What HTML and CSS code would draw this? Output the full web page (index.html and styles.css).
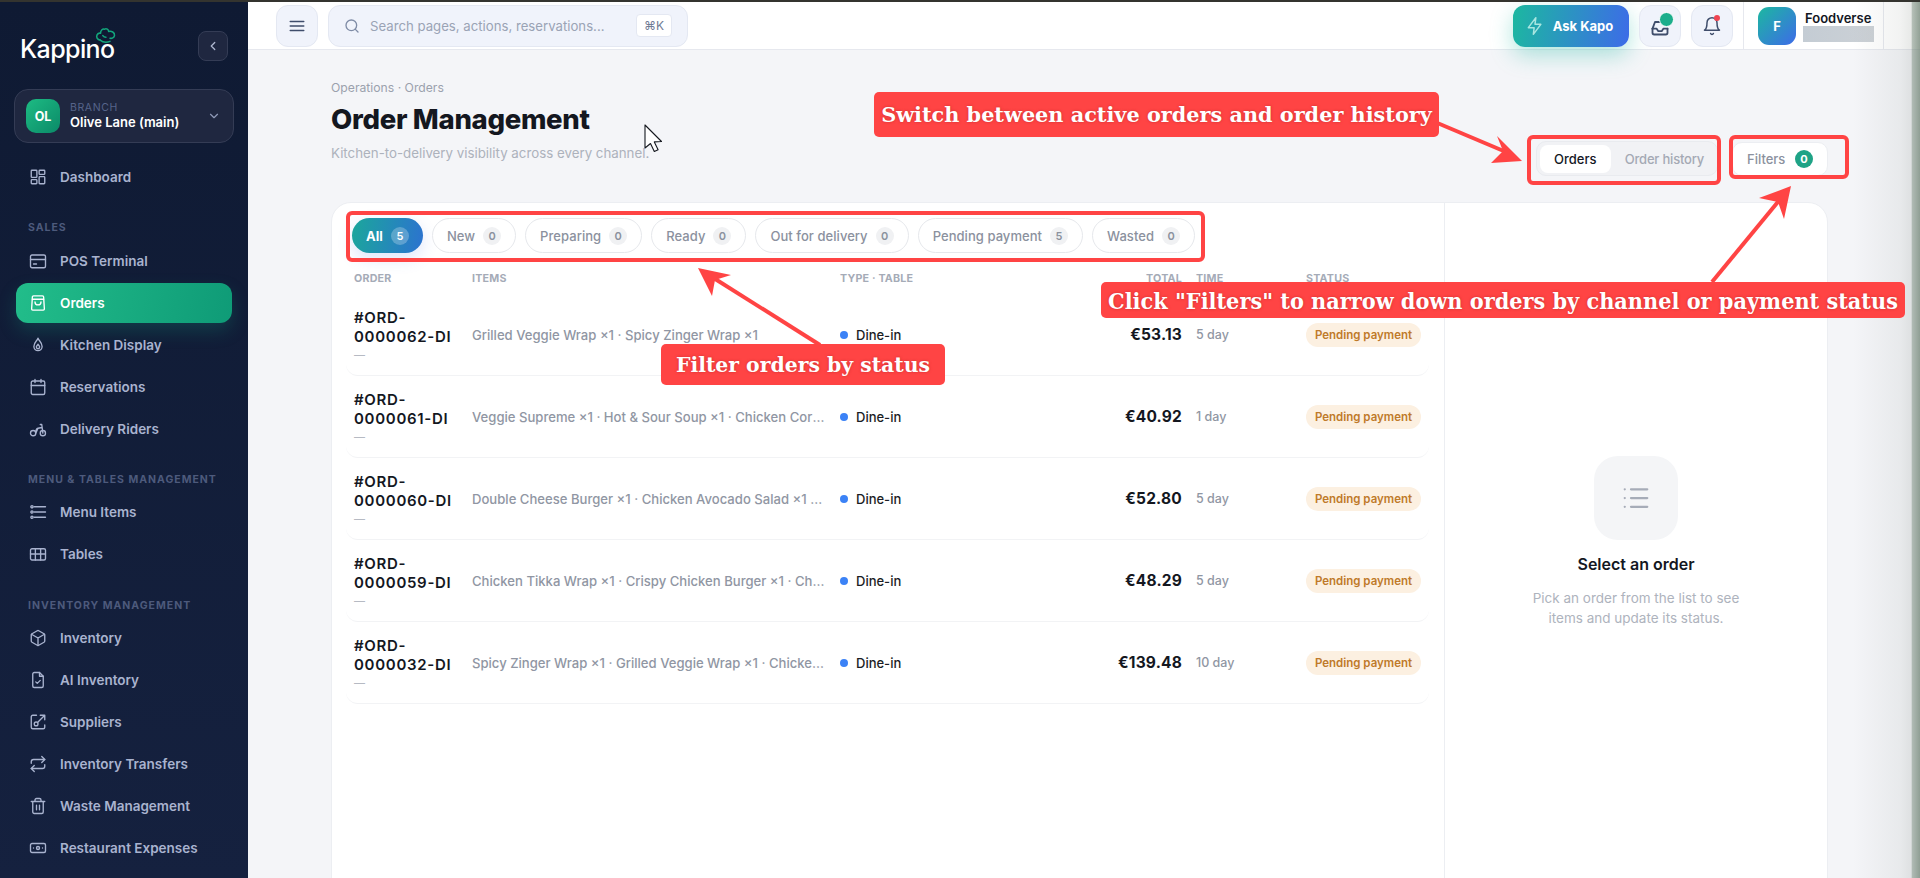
FILE: index.html
```html
<!DOCTYPE html>
<html lang="en">
<head>
  <meta charset="UTF-8">
  <title>Order Management</title>
  <meta name="viewport" content="width=device-width, initial-scale=1.0" />
  <link rel="stylesheet" href="styles.css">
</head>
<body>
<div class="app">

  <aside class="sidebar">
    <div class="brand">
      <div class="logo">
        <span class="logo-text">Kappino</span>
        <svg class="logo-hat" viewBox="0 0 24 20" fill="none" stroke="#12a67c" stroke-width="1.700" stroke-linecap="round" stroke-linejoin="round"><path d="M6 14.500C3 14 1.500 11.500 2.500 9 3.300 7 5 6.500 6.500 7 6.500 3.500 9 1.500 11 2.500 13 1 15.500 3 15.500 5 18.500 4 22.500 6 22 9.500 21.500 12 19 13 17 12.500"/><path d="M6 14.500C9 17 13 17.500 17 16"/><path d="M9 9.500c1 1.500 2 2 3.500 2"/></svg>
      </div>
      <button class="collapse-btn">
        <svg width="14" height="14" viewBox="0 0 24 24" fill="none" stroke="#aeb7cf" stroke-width="2.200" stroke-linecap="round" stroke-linejoin="round"><path d="m15 18-6-6 6-6"/></svg>
      </button>
    </div>

    <div class="branch">
      <div class="branch-avatar">OL</div>
      <div class="branch-info">
        <div class="branch-label">BRANCH</div>
        <div class="branch-name">Olive Lane (main)</div>
      </div>
      <svg width="14" height="14" viewBox="0 0 24 24" fill="none" stroke="#8f9ab8" stroke-width="2" stroke-linecap="round" stroke-linejoin="round"><path d="m6 9 6 6 6-6"/></svg>
    </div>

    <nav class="nav">
      <a class="nav-item"><svg viewBox="0 0 24 24"><rect x="3" y="3" width="7.500" height="9.500" rx="1"/><rect x="13.500" y="3" width="7.500" height="5.500" rx="1"/><rect x="13.500" y="11.500" width="7.500" height="9.500" rx="1"/><rect x="3" y="15.500" width="7.500" height="5.500" rx="1"/></svg>Dashboard</a>

      <div class="nav-label">SALES</div>
      <a class="nav-item"><svg viewBox="0 0 24 24"><rect x="2" y="4" width="20" height="17" rx="2"/><path d="M2 10h20M6 16h4"/></svg>POS Terminal</a>
      <a class="nav-item active"><svg viewBox="0 0 24 24"><path d="M6 2.500h12a1.500 1.500 0 0 1 1.500 1.500l1 16a1.500 1.500 0 0 1-1.500 1.500H5A1.500 1.500 0 0 1 3.500 20l1-16A1.500 1.500 0 0 1 6 2.500z"/><path d="M4.500 7h15M16 10.500a4 4 0 0 1-8 0"/></svg>Orders</a>
      <a class="nav-item"><svg viewBox="0 0 24 24"><path d="M12 3c.8 3 5.500 5.500 5.500 11a5.500 5.500 0 0 1-11 0C6.500 8.500 11.200 6 12 3z"/><path d="M12 11c.4 1.200 2.200 2 2.200 3.800a2.200 2.200 0 0 1-4.400 0c0-1.800 1.800-2.600 2.200-3.800z"/></svg>Kitchen Display</a>
      <a class="nav-item"><svg viewBox="0 0 24 24"><rect x="3" y="4" width="18" height="18" rx="2"/><path d="M3 10h18M8 2v4M16 2v4"/></svg>Reservations</a>
      <a class="nav-item"><svg viewBox="0 0 24 24"><circle cx="5.500" cy="17.500" r="3.500"/><circle cx="18.500" cy="17.500" r="3.500"/><path d="M15 6h2l1.500 11.500M9 17.500l3-6.500 5.500-1M9 17.500c0-3 1-6 3-6.500"/></svg>Delivery Riders</a>

      <div class="nav-label nav-label-tight">MENU &amp; TABLES MANAGEMENT</div>
      <a class="nav-item"><svg viewBox="0 0 24 24"><path d="M7 5h15M7 12h15M7 19h15"/><circle cx="4" cy="5" r="1.500"/><circle cx="4" cy="12" r="1.500"/><circle cx="4" cy="19" r="1.500"/></svg>Menu Items</a>
      <a class="nav-item"><svg viewBox="0 0 24 24"><rect x="2" y="5" width="20" height="15" rx="2"/><path d="M2 12h20M8.500 5v15M15.500 5v15"/></svg>Tables</a>

      <div class="nav-label nav-label-low">INVENTORY MANAGEMENT</div>
      <a class="nav-item"><svg viewBox="0 0 24 24"><path d="M21 8a2 2 0 0 0-1-1.700l-7-4a2 2 0 0 0-2 0l-7 4A2 2 0 0 0 3 8v8a2 2 0 0 0 1 1.700l7 4a2 2 0 0 0 2 0l7-4a2 2 0 0 0 1-1.700z"/><path d="m3.300 7 8.700 5 8.700-5M12 22V12"/></svg>Inventory</a>
      <a class="nav-item"><svg viewBox="0 0 24 24"><path d="M14 2H7a2 2 0 0 0-2 2v16a2 2 0 0 0 2 2h10a2 2 0 0 0 2-2V7z"/><path d="M14 2v5h5M9 14.500l2 2 4-4"/></svg>AI Inventory</a>
      <a class="nav-item"><svg viewBox="0 0 24 24"><path d="M10 3H5a2 2 0 0 0-2 2v14a2 2 0 0 0 2 2h14a2 2 0 0 0 2-2v-3"/><path d="M15 3h6v6M21 3 12 12"/><circle cx="9.500" cy="14.500" r="2.500"/></svg>Suppliers</a>
      <a class="nav-item"><svg viewBox="0 0 24 24"><path d="m17 2 4 4-4 4"/><path d="M3 11V9a3 3 0 0 1 3-3h15"/><path d="m7 22-4-4 4-4"/><path d="M21 13v2a3 3 0 0 1-3 3H3"/></svg>Inventory Transfers</a>
      <a class="nav-item"><svg viewBox="0 0 24 24"><path d="M3 6h18M19 6v14a2 2 0 0 1-2 2H7a2 2 0 0 1-2-2V6M8 6V4a2 2 0 0 1 2-2h4a2 2 0 0 1 2 2v2M10 11v6M14 11v6"/></svg>Waste Management</a>
      <a class="nav-item"><svg viewBox="0 0 24 24"><rect x="2" y="6" width="20" height="12" rx="2"/><circle cx="12" cy="12" r="2"/><path d="M6 12h.010M18 12h.010"/></svg>Restaurant Expenses</a>
    </nav>
  </aside>

  <div class="main">
    <header class="topbar">
      <button class="icon-btn">
        <svg width="18" height="18" viewBox="0 0 24 24" fill="none" stroke="#3f4d6b" stroke-width="2" stroke-linecap="round"><path d="M3 6h18M3 12h18M3 18h18"/></svg>
      </button>
      <div class="search">
        <svg width="16" height="16" viewBox="0 0 24 24" fill="none" stroke="#7f8ca6" stroke-width="2" stroke-linecap="round"><circle cx="11" cy="11" r="8"/><path d="m21 21-4.300-4.300"/></svg>
        <span class="search-text">Search pages, actions, reservations...</span>
        <span class="kbd">⌘K</span>
      </div>
      <div class="topbar-right">
        <button class="ask-btn">
          <svg width="20" height="20" viewBox="0 0 24 24" fill="none" stroke="#a8e6e0" stroke-width="1.800" stroke-linecap="round" stroke-linejoin="round"><path d="M13 2 4 14h7l-1 8 9-12h-7z"/></svg>
          Ask Kapo
        </button>
        <button class="icon-btn has-badge">
          <svg class="inbox-icon" width="20" height="20" viewBox="0 0 24 24" fill="none" stroke="#3f4d6b" stroke-width="2.200" stroke-linecap="round" stroke-linejoin="round"><path d="M3 14l3-8h7"/><path d="M3 14v5a2 2 0 0 0 2 2h14a2 2 0 0 0 2-2v-5"/><path d="M3 14h5l2 3h4l2-3h5"/></svg>
          <span class="dot-green"></span>
        </button>
        <button class="icon-btn has-badge">
          <svg width="20" height="20" viewBox="0 0 24 24" fill="none" stroke="#3f4d6b" stroke-width="1.800" stroke-linecap="round" stroke-linejoin="round"><path d="M6 8a6 6 0 0 1 12 0c0 7 3 9 3 9H3s3-2 3-9"/><path d="M10.300 21a1.900 1.900 0 0 0 3.400 0"/></svg>
          <span class="dot-red"></span>
        </button>
        <div class="profile">
          <div class="profile-avatar">F</div>
          <div class="profile-info">
            <div class="profile-name">Foodverse</div>
            <div class="profile-blur"></div>
          </div>
        </div>
      </div>
    </header>

    <main class="content">
      <div class="page-head">
        <div class="page-title">
          <div class="crumb">Operations · Orders</div>
          <h1>Order Management</h1>
          <p>Kitchen-to-delivery visibility across every channel.</p>
        </div>
        <div class="segment">
          <span class="segment-item on">Orders</span>
          <span class="segment-item">Order history</span>
        </div>
        <button class="filters">Filters <span class="filters-count">0</span></button>
      </div>

      <section class="card">
        <div class="orders">
          <div class="tabs">
            <span class="tab on">All <b>5</b></span>
            <span class="tab">New <b>0</b></span>
            <span class="tab">Preparing <b>0</b></span>
            <span class="tab">Ready <b>0</b></span>
            <span class="tab">Out for delivery <b>0</b></span>
            <span class="tab">Pending payment <b>5</b></span>
            <span class="tab">Wasted <b>0</b></span>
          </div>

          <div class="row-grid table-head">
            <span>ORDER</span><span>ITEMS</span><span>TYPE · TABLE</span><span class="t-right">TOTAL</span><span class="t-time">TIME</span><span>STATUS</span>
          </div>

          <div class="row-grid order-row">
            <div class="order-id">#ORD-<br>0000062-DI<small>—</small></div>
            <div class="order-items">Grilled Veggie Wrap ×1 · Spicy Zinger Wrap ×1</div>
            <div class="order-type"><i></i>Dine-in</div>
            <div class="order-total">€53.13</div>
            <div class="order-time">5 day</div>
            <div><span class="pill">Pending payment</span></div>
          </div>
          <div class="row-grid order-row">
            <div class="order-id">#ORD-<br>0000061-DI<small>—</small></div>
            <div class="order-items">Veggie Supreme ×1 · Hot &amp; Sour Soup ×1 · Chicken Corn Soup ×1</div>
            <div class="order-type"><i></i>Dine-in</div>
            <div class="order-total">€40.92</div>
            <div class="order-time">1 day</div>
            <div><span class="pill">Pending payment</span></div>
          </div>
          <div class="row-grid order-row">
            <div class="order-id">#ORD-<br>0000060-DI<small>—</small></div>
            <div class="order-items">Double Cheese Burger ×1 · Chicken Avocado Salad ×1 · Fries ×1</div>
            <div class="order-type"><i></i>Dine-in</div>
            <div class="order-total">€52.80</div>
            <div class="order-time">5 day</div>
            <div><span class="pill">Pending payment</span></div>
          </div>
          <div class="row-grid order-row">
            <div class="order-id">#ORD-<br>0000059-DI<small>—</small></div>
            <div class="order-items">Chicken Tikka Wrap ×1 · Crispy Chicken Burger ×1 · Chicken Soup ×1</div>
            <div class="order-type"><i></i>Dine-in</div>
            <div class="order-total">€48.29</div>
            <div class="order-time">5 day</div>
            <div><span class="pill">Pending payment</span></div>
          </div>
          <div class="row-grid order-row">
            <div class="order-id">#ORD-<br>0000032-DI<small>—</small></div>
            <div class="order-items">Spicy Zinger Wrap ×1 · Grilled Veggie Wrap ×1 · Chicken Tikka Wrap ×1</div>
            <div class="order-type"><i></i>Dine-in</div>
            <div class="order-total">€139.48</div>
            <div class="order-time">10 day</div>
            <div><span class="pill">Pending payment</span></div>
          </div>
        </div>

        <div class="detail">
          <div class="detail-icon">
            <svg width="30" height="30" viewBox="0 0 24 24" fill="none" stroke="#a6acb8" stroke-width="1.800" stroke-linecap="round"><path d="M8 5h13M8 12h13M8 19h13M3 5h.010M3 12h.010M3 19h.010"/></svg>
          </div>
          <h3>Select an order</h3>
          <p>Pick an order from the list to see items and update its status.</p>
        </div>
      </section>
    </main>
  </div>

  <!-- annotations drawn on top of the screenshot -->
  <div class="edge-shade"></div>
  <svg class="marks" viewBox="0 0 1920 878" fill="none">
    <rect x="1529" y="137" width="190" height="46" rx="4" stroke="#ff4444" stroke-width="4"/>
    <rect x="1731" y="137" width="116" height="40" rx="4" stroke="#ff4444" stroke-width="4"/>
    <rect x="348" y="213" width="855" height="47" rx="4" stroke="#ff4444" stroke-width="4"/>
    <path d="M1435 122 1506 152" stroke="#ff4444" stroke-width="4"/>
    <path d="M1522 161 1491 163 1503 151 1497 136z" fill="#ff4444"/>
    <path d="M820 345 712 277" stroke="#ff4444" stroke-width="4"/>
    <path d="M698 268 731 275 715 280 712 296z" fill="#ff4444"/>
    <path d="M1712 282 1782 197" stroke="#ff4444" stroke-width="4"/>
    <path d="M1791 186 1784 219 1778 202 1759 198z" fill="#ff4444"/>
    <path d="M645 125v23l5.500-4.500 3.800 8 3.800-1.800-3.800-7.800 7.200-.4z" fill="#fff" stroke="#15181f" stroke-width="1.100" stroke-linejoin="round"/>
  </svg>
  <div class="note note-switch">Switch between active orders and order history</div>
  <div class="note note-status">Filter orders by status</div>
  <div class="note note-filters">Click "Filters" to narrow down orders by channel or payment status</div>

</div>
</body>
</html>
```

FILE: styles.css
```css
* {
  box-sizing: border-box;
}

html, body {
  margin: 0;
  height: 100%;
  overflow: hidden;
}

body {
  font-family: "Inter", "Liberation Sans", sans-serif;
  color: #14171f;
  background: #f4f5f8;
}

button {
  font-family: inherit;
  cursor: pointer;
}

.app {
  position: relative;
  display: flex;
  height: 878px;
  border-top: 2px solid #34342f;
}

/* sidebar */
.sidebar {
  width: 248px;
  flex-shrink: 0;
  background: linear-gradient(180deg, #0f1a33 0%, #15213f 100%);
  color: #a9b3cf;
}

.brand {
  display: flex;
  align-items: center;
  justify-content: space-between;
  height: 87px;
  padding: 0 20px;
}

.logo {
  position: relative;
  padding-top: 6px;
}

.logo-text {
  font-size: 25px;
  font-weight: 500;
  letter-spacing: -0.6px;
  color: #fff;
}

.logo-hat {
  position: absolute;
  left: 74px;
  top: -1px;
  width: 23px;
  height: 18px;
}

.collapse-btn {
  display: flex;
  align-items: center;
  justify-content: center;
  width: 30px;
  height: 30px;
  background: #1f2740;
  border: 1px solid #343c55;
  border-radius: 8px;
}

.branch {
  display: flex;
  align-items: center;
  gap: 10px;
  height: 54px;
  margin: 0 14px;
  padding: 0 12px 0 11px;
  background: #1f2740;
  border: 1px solid #343c55;
  border-radius: 14px;
}

.branch-avatar {
  display: flex;
  align-items: center;
  justify-content: center;
  width: 34px;
  height: 34px;
  flex-shrink: 0;
  border-radius: 10px;
  background: linear-gradient(135deg, #1dbb83, #0b8a68);
  color: #fff;
  font-size: 12.500px;
  font-weight: 700;
}

.branch-info {
  flex: 1;
}

.branch-label {
  font-size: 10.500px;
  line-height: 13px;
  letter-spacing: 0.6px;
  color: #56648a;
}

.branch-name {
  font-size: 13px;
  line-height: 17px;
  font-weight: 600;
  color: #fff;
  white-space: nowrap;
}

.nav {
  padding: 13px 16px 0;
}

.nav-item {
  display: flex;
  align-items: center;
  gap: 13px;
  height: 42px;
  padding-left: 13px;
  border-radius: 12px;
  font-size: 13.500px;
  font-weight: 600;
  color: #a9b3cf;
  white-space: nowrap;
}

.nav-item svg {
  width: 18px;
  height: 18px;
  flex-shrink: 0;
  fill: none;
  stroke: currentColor;
  stroke-width: 1.800;
  stroke-linecap: round;
  stroke-linejoin: round;
}

.nav-item.active {
  height: 40px;
  margin: 1px 0;
  color: #fff;
  background: linear-gradient(100deg, #22bd8a, #0f9b77);
  box-shadow: 0 8px 18px rgba(20, 170, 130, 0.22);
}

.nav-label {
  margin: 23px 0 5px 12px;
  font-size: 10.500px;
  line-height: 14px;
  font-weight: 700;
  letter-spacing: 1px;
  color: #4d5a7c;
  white-space: nowrap;
}

.nav-label-tight {
  margin-bottom: 4px;
}

.nav-label-low {
  margin-top: 24px;
  margin-bottom: 4px;
}

/* top bar */
.main {
  flex: 1;
  min-width: 0;
  display: flex;
  flex-direction: column;
  overflow: hidden;
}

.topbar {
  display: flex;
  align-items: center;
  flex-shrink: 0;
  height: 48px;
  padding: 0 0 0 28px;
  background: #fff;
  border-bottom: 1px solid #e6e8ee;
}

.icon-btn {
  position: relative;
  display: flex;
  align-items: center;
  justify-content: center;
  width: 42px;
  height: 42px;
  flex-shrink: 0;
  background: #f0f3fb;
  border: 1px solid #e4e8f2;
  border-radius: 12px;
}

.inbox-icon {
  margin-top: 3px;
}

.search {
  display: flex;
  align-items: center;
  gap: 10px;
  width: 360px;
  height: 42px;
  margin-left: 10px;
  padding: 0 15px;
  background: #f0f3fb;
  border: 1px solid #e4e8f2;
  border-radius: 12px;
}

.search-text {
  flex: 1;
  font-size: 13.200px;
  color: #9aa3b5;
  white-space: nowrap;
}

.kbd {
  padding: 3px 7px;
  background: #fff;
  border: 1px solid #e4e8f2;
  border-radius: 4px;
  font-size: 12px;
  color: #6f7b94;
}

.topbar-right {
  display: flex;
  align-items: center;
  gap: 10px;
  margin-left: auto;
  padding-right: 36px;
}

.ask-btn {
  display: flex;
  align-items: center;
  justify-content: center;
  gap: 8px;
  width: 116px;
  height: 42px;
  padding: 0 10px 0 6px;
  border: 0;
  border-radius: 12px;
  background: linear-gradient(100deg, #1cb8a0, #3d6be8);
  box-shadow: 0 8px 22px rgba(28, 184, 160, 0.35);
  color: #fff;
  font-size: 13px;
  font-weight: 700;
}

.dot-green {
  position: absolute;
  top: 6px;
  right: 6px;
  width: 15px;
  height: 15px;
  border: 1px solid #fff;
  border-radius: 50%;
  background: #1cae8c;
}

.dot-red {
  position: absolute;
  top: 9px;
  right: 12px;
  width: 6px;
  height: 6px;
  border-radius: 50%;
  background: #f04452;
}

.profile {
  display: flex;
  align-items: center;
  gap: 7px;
  width: 141px;
  height: 48px;
  padding-left: 14px;
  border-left: 1px solid #e6e8ee;
  border-right: 1px solid #e6e8ee;
}

.profile-avatar {
  display: flex;
  align-items: center;
  justify-content: center;
  width: 38px;
  height: 38px;
  border-radius: 11px;
  background: linear-gradient(135deg, #1cb8a0, #3d6be8);
  color: #fff;
  font-size: 13px;
  font-weight: 700;
}

.profile-name {
  padding-left: 2px;
  font-size: 13px;
  line-height: 16px;
  font-weight: 600;
}

.profile-blur {
  width: 71px;
  height: 16px;
  background: linear-gradient(90deg, #c4ccd4, #ccd1d6);
}

/* page */
.content {
  flex: 1;
  padding: 30px 92px 0 83px;
}

.page-head {
  display: flex;
  align-items: flex-end;
  gap: 14px;
  margin-bottom: 26px;
}

.page-title {
  flex: 1;
  padding-bottom: 13px;
}

.crumb {
  font-size: 12.200px;
  line-height: 15px;
  color: #9ba1ad;
}

h1 {
  margin: 8px 0 0;
  font-size: 27.500px;
  line-height: 32px;
  font-weight: 800;
  letter-spacing: -0.3px;
  color: #14171f;
}

.page-title p {
  margin: 8px 0 0;
  font-size: 13.300px;
  line-height: 20px;
  color: #adb2bc;
}

.segment {
  display: flex;
  align-items: center;
  gap: 6px;
  height: 35px;
  padding: 0 3px;
  background: #f1f2f5;
  border: 1px solid #e9ebef;
  border-radius: 10px;
}

.segment-item {
  padding: 0 10px 0 8px;
  font-size: 13px;
  font-weight: 500;
  letter-spacing: -0.2px;
  color: #a4a9b4;
  white-space: nowrap;
}

.segment-item.on {
  width: 71px;
  height: 28px;
  padding: 0;
  line-height: 28px;
  text-align: center;
  background: #fff;
  border-radius: 8px;
  letter-spacing: 0;
  color: #14171f;
}

.filters {
  display: flex;
  align-items: center;
  justify-content: space-between;
  width: 96px;
  height: 34px;
  padding: 0 14px;
  background: #fff;
  border: 1px solid #eceef2;
  border-radius: 10px;
  font-size: 13px;
  font-weight: 500;
  color: #8b919e;
}

.filters-count {
  display: flex;
  align-items: center;
  justify-content: center;
  width: 18px;
  height: 18px;
  border-radius: 50%;
  background: #1fa386;
  color: #fff;
  font-size: 11px;
  font-weight: 700;
}

.card {
  display: flex;
  height: 700px;
  background: #fff;
  border: 1px solid #eceef2;
  border-radius: 20px;
}

.orders {
  width: 1112px;
  flex-shrink: 0;
  padding: 15px 15px 0 14px;
}

.tabs {
  display: flex;
  gap: 9px;
  padding-left: 6px;
}

.tab {
  display: flex;
  align-items: center;
  gap: 8px;
  height: 35px;
  padding: 0 14px;
  background: #fff;
  border: 1px solid #e6e8ec;
  border-radius: 18px;
  font-size: 13px;
  font-weight: 500;
  letter-spacing: 0.05px;
  color: #8b919e;
  white-space: nowrap;
}

.tab b {
  display: flex;
  align-items: center;
  justify-content: center;
  width: 18px;
  height: 18px;
  border-radius: 50%;
  background: #f0f1f3;
  font-size: 11px;
  font-weight: 600;
  color: #8b919e;
}

.tab.on {
  border: 0;
  background: linear-gradient(100deg, #1ba79b, #2c72d0);
  box-shadow: 0 6px 16px rgba(70, 110, 230, 0.18);
  color: #fff;
  font-weight: 700;
}

.tab.on b {
  background: rgba(255, 255, 255, 0.25);
  color: #fff;
}

.row-grid {
  display: grid;
  grid-template-columns: 118px 368px 210px 132px 124px 1fr;
  align-items: center;
  padding-left: 8px;
}

.table-head {
  margin-top: 18px;
  height: 14px;
  margin-bottom: 9px;
  font-size: 10.700px;
  font-weight: 700;
  letter-spacing: 0.2px;
  color: #a5abb7;
}

.t-right {
  text-align: right;
}

.t-time {
  padding-left: 14px;
}

.order-row {
  height: 82px;
  border-bottom: 1px solid #f2f3f5;
  border-radius: 12px;
}

.order-id {
  padding-top: 3px;
  font-size: 15px;
  line-height: 19px;
  font-weight: 600;
  letter-spacing: 0.7px;
  color: #14171f;
  white-space: nowrap;
}

.order-id small {
  display: block;
  font-size: 11px;
  font-weight: 400;
  color: #b6bac3;
}

.order-items {
  padding-right: 15px;
  font-size: 13.100px;
  font-weight: 500;
  color: #9096a3;
  white-space: nowrap;
  overflow: hidden;
  text-overflow: ellipsis;
}

.order-type {
  display: flex;
  align-items: center;
  gap: 8px;
  font-size: 13px;
  font-weight: 500;
  color: #1a1d24;
}

.order-type i {
  width: 8px;
  height: 8px;
  border-radius: 50%;
  background: #3b82f6;
}

.order-total {
  text-align: right;
  font-size: 15.500px;
  font-weight: 700;
  letter-spacing: 0.2px;
}

.order-time {
  padding-left: 14px;
  font-size: 12.500px;
  font-weight: 500;
  color: #9096a3;
}

.pill {
  display: inline-block;
  width: 115px;
  height: 24px;
  line-height: 24px;
  text-align: center;
  background: #fcf0e1;
  border-radius: 12px;
  font-size: 11.500px;
  font-weight: 600;
  color: #bf7a2a;
  white-space: nowrap;
}

.detail {
  flex: 1;
  display: flex;
  flex-direction: column;
  align-items: center;
  padding-top: 253px;
  border-left: 1px solid #eceef2;
}

.detail-icon {
  display: flex;
  align-items: center;
  justify-content: center;
  width: 84px;
  height: 84px;
  background: #f4f5f7;
  border-radius: 24px;
}

.detail h3 {
  margin: 14px 0 0;
  font-size: 16px;
  line-height: 20px;
  font-weight: 600;
}

.detail p {
  width: 240px;
  margin: 14px 0 0;
  font-size: 13.500px;
  line-height: 20px;
  text-align: center;
  color: #aeb3bd;
}

/* overlay marks */
.edge-shade {
  position: absolute;
  top: 0;
  right: 0;
  bottom: 0;
  width: 67px;
  background: linear-gradient(90deg, rgba(90, 100, 90, 0) 0%, rgba(90, 100, 90, 0.08) 70%, rgba(90, 100, 90, 0.14) 87%, rgba(110, 130, 115, 0.5) 88%, rgba(110, 130, 115, 0.75) 100%);
  pointer-events: none;
}

.marks {
  position: absolute;
  left: 0;
  top: -2px;
  width: 1920px;
  height: 878px;
  pointer-events: none;
}

.note {
  position: absolute;
  display: flex;
  align-items: center;
  justify-content: center;
  background: #ff4444;
  border-radius: 5px;
  font-family: "DejaVu Serif", "Liberation Serif", serif;
  font-weight: 700;
  color: #fff;
  text-shadow: 0 0 3px #c92f2f;
  white-space: nowrap;
}

.note-switch {
  left: 874px;
  top: 90px;
  width: 565px;
  height: 45px;
  font-size: 20.800px;
}

.note-status {
  left: 661px;
  top: 342px;
  width: 284px;
  height: 41px;
  font-size: 20.400px;
}

.note-filters {
  left: 1101px;
  top: 280px;
  width: 804px;
  height: 36px;
  font-family: "DejaVu Serif Condensed", "DejaVu Serif", serif;
  font-size: 23.200px;
}
```
